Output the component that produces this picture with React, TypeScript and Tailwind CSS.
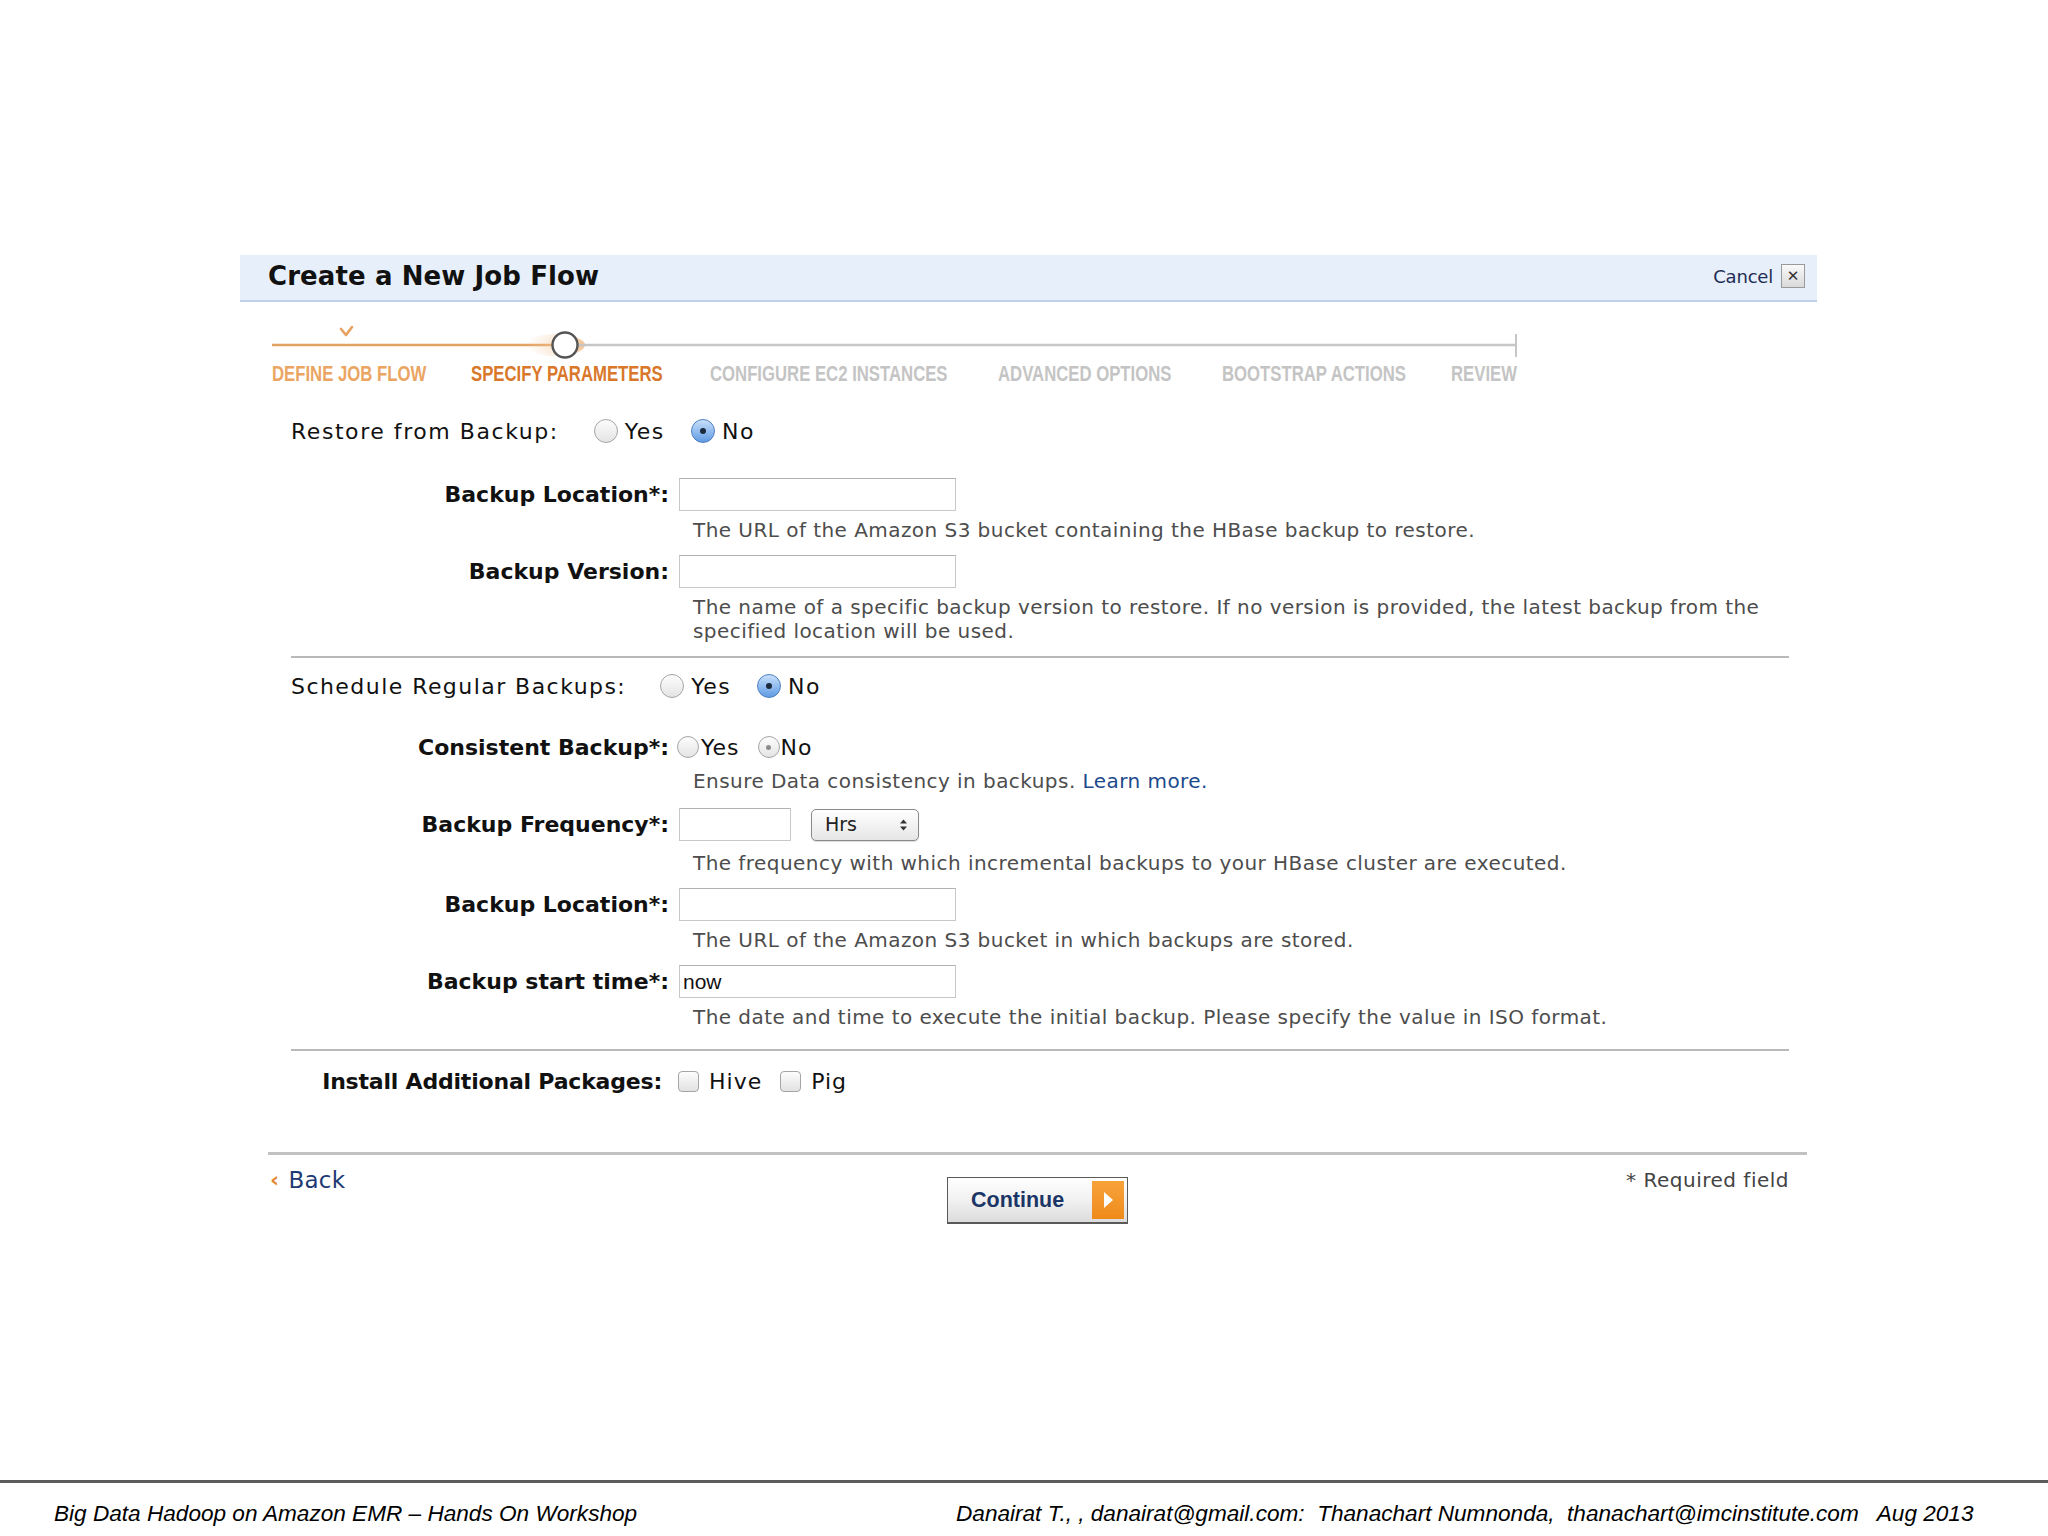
import React from 'react'

// Create a New Job Flow — step 2 (Specify Parameters)

const steps = [
  { label: 'DEFINE JOB FLOW', w: 'w-[199px]', color: 'text-[#eaa563]' },
  { label: 'SPECIFY PARAMETERS', w: 'w-[239px]', color: 'text-[#d9772b]' },
  { label: 'CONFIGURE EC2 INSTANCES', w: 'w-[288px]', color: 'text-[#c4c4c4]' },
  { label: 'ADVANCED OPTIONS', w: 'w-[224px]', color: 'text-[#c4c4c4]' },
  { label: 'BOOTSTRAP ACTIONS', w: 'w-[229px]', color: 'text-[#c4c4c4]' },
  { label: 'REVIEW', w: 'w-[80px]', color: 'text-[#c4c4c4]' },
]

function Radio({ checked, dim, small }: { checked?: boolean; dim?: boolean; small?: boolean }) {
  const size = small ? 'w-[22px] h-[22px]' : 'w-[24px] h-[24px]'
  if (checked) {
    return (
      <span
        className={`${size} rounded-full border border-[#4f7fbf] bg-gradient-to-b from-[#c8e0fa] to-[#5f9be3] flex items-center justify-center shrink-0`}
      >
        <span className="w-[6px] h-[6px] rounded-full bg-[#1c2a3c]" />
      </span>
    )
  }
  return (
    <span
      className={`${size} rounded-full border border-[#a5a5a5] bg-gradient-to-b from-[#fdfdfd] to-[#e4e4e4] flex items-center justify-center shrink-0`}
    >
      {dim && <span className="w-[5px] h-[5px] rounded-full bg-[#8c8c8c]" />}
    </span>
  )
}

function Checkbox() {
  return (
    <span className="w-[21px] h-[21px] rounded-[4px] border border-[#a5a5a5] bg-gradient-to-b from-[#fdfdfd] to-[#e2e2e2] shrink-0" />
  )
}

function FieldRow({ label, children }: { label: string; children: React.ReactNode }) {
  return (
    <div className="flex items-center h-[33px]">
      <div className="w-[429px] text-right font-bold text-[22px] text-[#111] whitespace-nowrap">{label}</div>
      <div className="ml-[10px] flex items-center">{children}</div>
    </div>
  )
}

function TextInput({ w, value }: { w: string; value?: string }) {
  return (
    <div
      className={`${w} h-[33px] border border-[#c8c8c8] border-t-[#b3b3b3] bg-white flex items-center pl-[3px] text-[21px] text-[#111] font-['Liberation_Sans',sans-serif]`}
    >
      {value}
    </div>
  )
}

function Help({ children, h = 'h-[24px]' }: { children: React.ReactNode; h?: string }) {
  return (
    <div className={`${h} ml-[453px] text-[20px] leading-[24px] tracking-[0.45px] text-[#4d4d4d] whitespace-nowrap`}>
      {children}
    </div>
  )
}

function ProgressBar() {
  return (
    <svg width="1252" height="42" viewBox="0 0 1252 42" className="block">
      <defs>
        <radialGradient id="glow" cx="1" cy="0.5" r="1">
          <stop offset="0" stopColor="#f1b57a" stopOpacity="0.9" />
          <stop offset="1" stopColor="#f6d2ad" stopOpacity="0" />
        </radialGradient>
      </defs>
      <line x1="0" y1="25" x2="293" y2="25" stroke="#e2a264" strokeWidth="2.5" />
      <ellipse cx="283" cy="25" rx="30" ry="11" fill="url(#glow)" />
      <line x1="306" y1="25" x2="1244" y2="25" stroke="#c6c6c6" strokeWidth="2.5" />
      <line x1="1244" y1="14" x2="1244" y2="37" stroke="#c6c6c6" strokeWidth="2" />
      <path d="M69 9 L74 15 L80 7" fill="none" stroke="#e6a15e" strokeWidth="2.6" strokeLinecap="round" strokeLinejoin="round" />
      <circle cx="293" cy="25" r="12.5" fill="#fff" stroke="#555" strokeWidth="2.4" />
    </svg>
  )
}

export default function App() {
  return (
    <div className="w-[2048px] h-[1536px] bg-white flex flex-col font-['DejaVu_Sans','Verdana',sans-serif] text-[#111]">
      <div className="pt-[255px] pl-[240px]">
        <div className="w-[1577px]">
          {/* header */}
          <div className="h-[47px] bg-[#e7effa] border-b-2 border-[#bed2ec] flex items-center justify-between pl-[28px] pr-[12px]">
            <div className="font-bold text-[26px] text-[#111] tracking-[0.1px] -mt-[3px]">Create a New Job Flow</div>
            <div className="flex items-center gap-[8px] -mt-[3px]">
              <span className="text-[18px] text-[#1f2d55] tracking-[-0.2px]">Cancel</span>
              <span className="w-[24px] h-[24px] border border-[#9a9a9a] bg-gradient-to-b from-[#fafafa] to-[#d9d9d9] flex items-center justify-center text-[15px] font-bold text-[#333] leading-none">
                ✕
              </span>
            </div>
          </div>

          {/* progress */}
          <div className="mt-[18px] ml-[32px]">
            <ProgressBar />
          </div>
          <div className="h-[24px] ml-[32px] flex items-center">
            {steps.map((s) => (
              <div key={s.label} className={`${s.w} shrink-0 h-[24px] overflow-visible whitespace-nowrap`}>
                <span
                  className={`inline-block origin-left scale-x-[0.76] font-['Liberation_Sans',sans-serif] font-bold text-[22px] leading-[24px] ${s.color}`}
                >
                  {s.label}
                </span>
              </div>
            ))}
          </div>

          {/* restore */}
          <div className="mt-[30px] h-[30px] ml-[51px] flex items-center text-[22px] tracking-[1.55px]">
            <span>Restore from Backup:</span>
            <span className="ml-[35px] flex items-center">
              <Radio />
              <span className="ml-[7px]">Yes</span>
            </span>
            <span className="ml-[26px] flex items-center">
              <Radio checked />
              <span className="ml-[7px]">No</span>
            </span>
          </div>

          <div className="mt-[32px]">
            <FieldRow label="Backup Location*:">
              <TextInput w="w-[277px]" />
            </FieldRow>
          </div>
          <div className="mt-[7px]">
            <Help>The URL of the Amazon S3 bucket containing the HBase backup to restore.</Help>
          </div>
          <div className="mt-[13px]">
            <FieldRow label="Backup Version:">
              <TextInput w="w-[277px]" />
            </FieldRow>
          </div>
          <div className="mt-[7px]">
            <Help h="h-[48px]">
              The name of a specific backup version to restore. If no version is provided, the latest backup from the
              <br />
              specified location will be used.
            </Help>
          </div>

          <div className="mt-[13px] h-[2px] ml-[51px] mr-[28px] bg-[#b9b9b9]" />

          {/* schedule */}
          <div className="mt-[13px] h-[30px] ml-[51px] flex items-center text-[22px] tracking-[1.45px]">
            <span>Schedule Regular Backups:</span>
            <span className="ml-[34px] flex items-center">
              <Radio />
              <span className="ml-[7px]">Yes</span>
            </span>
            <span className="ml-[26px] flex items-center">
              <Radio checked />
              <span className="ml-[7px]">No</span>
            </span>
          </div>

          <div className="mt-[31px] h-[30px] flex items-center">
            <div className="w-[429px] text-right font-bold text-[22px] whitespace-nowrap">Consistent Backup*:</div>
            <span className="ml-[8px] flex items-center text-[22px] tracking-[1px]">
              <Radio small />
              <span className="ml-[2px]">Yes</span>
            </span>
            <span className="ml-[18px] flex items-center text-[22px] tracking-[1px]">
              <Radio small dim />
              <span className="ml-[1px]">No</span>
            </span>
          </div>
          <div className="mt-[7px]">
            <Help>
              Ensure Data consistency in backups. <span className="text-[#1b4a8c]">Learn more.</span>
            </Help>
          </div>

          <div className="mt-[15px]">
            <FieldRow label="Backup Frequency*:">
              <TextInput w="w-[112px]" />
              <div className="ml-[20px] w-[108px] h-[32px] rounded-[5px] border border-[#8a8a8a] bg-gradient-to-b from-[#ffffff] to-[#e6e6e6] flex items-center justify-between pl-[13px] pr-[10px] text-[19px] text-[#222] shadow-[0_1px_1px_rgba(0,0,0,0.15)]">
                <span>Hrs</span>
                <svg width="9" height="14" viewBox="0 0 9 14">
                  <path d="M1 5.5 L4.5 1.5 L8 5.5 Z" fill="#333" />
                  <path d="M1 8.5 L4.5 12.5 L8 8.5 Z" fill="#333" />
                </svg>
              </div>
            </FieldRow>
          </div>
          <div className="mt-[10px]">
            <Help>The frequency with which incremental backups to your HBase cluster are executed.</Help>
          </div>

          <div className="mt-[13px]">
            <FieldRow label="Backup Location*:">
              <TextInput w="w-[277px]" />
            </FieldRow>
          </div>
          <div className="mt-[7px]">
            <Help>The URL of the Amazon S3 bucket in which backups are stored.</Help>
          </div>

          <div className="mt-[13px]">
            <FieldRow label="Backup start time*:">
              <TextInput w="w-[277px]" value="now" />
            </FieldRow>
          </div>
          <div className="mt-[7px]">
            <Help>The date and time to execute the initial backup. Please specify the value in ISO format.</Help>
          </div>

          <div className="mt-[20px] h-[2px] ml-[51px] mr-[28px] bg-[#b9b9b9]" />

          {/* packages */}
          <div className="mt-[15px] h-[30px] flex items-center">
            <div className="w-[422px] text-right font-bold text-[22px] tracking-[-0.2px] whitespace-nowrap">Install Additional Packages:</div>
            <span className="ml-[16px] flex items-center text-[22px] tracking-[1px]">
              <Checkbox />
              <span className="ml-[10px]">Hive</span>
            </span>
            <span className="ml-[18px] flex items-center text-[22px] tracking-[1px]">
              <Checkbox />
              <span className="ml-[10px]">Pig</span>
            </span>
          </div>

          <div className="mt-[56px] h-[3px] ml-[28px] mr-[10px] bg-[#c2c2c2]" />

          {/* actions */}
          <div className="mt-[13px] flex items-start">
            <div className="w-[707px] pl-[30px] flex items-center h-[24px] text-[23px] tracking-[0.3px]">
              <span className="text-[#e4872f] text-[22px] font-bold leading-none">‹</span>
              <span className="ml-[9px] text-[#1e3a74]">Back</span>
            </div>
            <div className="mt-[9px] w-[181px] h-[47px] border border-[#5a5a5a] border-b-2 bg-gradient-to-b from-[#ffffff] via-[#f1f1f1] to-[#dcdcdc] flex items-center pl-[23px] pr-[3px]">
              <span className="font-['Liberation_Sans',sans-serif] font-bold text-[21.5px] text-[#1b3566]">Continue</span>
              <span className="ml-auto w-[32px] h-[38px] bg-gradient-to-b from-[#f7a33a] to-[#ef8a18] flex items-center justify-center">
                <svg width="12" height="18" viewBox="0 0 12 18">
                  <path d="M2 1 L11 9 L2 17 Z" fill="#fff" />
                </svg>
              </span>
            </div>
            <div className="flex-1 pr-[28px] h-[24px] flex items-center justify-end text-[20px] tracking-[0.5px] text-[#444]">
              * Required field
            </div>
          </div>
        </div>
      </div>

      {/* slide footer */}
      <div className="mt-auto">
        <div className="h-[3px] bg-[#5c5c5c]" />
        <div className="mt-[17px] h-[28px] flex items-center font-['Liberation_Sans',sans-serif] italic text-[22.6px] text-black whitespace-pre">
          <span className="pl-[54px] w-[956px] shrink-0">Big Data Hadoop on Amazon EMR – Hands On Workshop</span>
          <span>Danairat T., , danairat@gmail.com:  Thanachart Numnonda,  thanachart@imcinstitute.com   Aug 2013</span>
        </div>
        <div className="h-[8px]" />
      </div>
    </div>
  )
}
